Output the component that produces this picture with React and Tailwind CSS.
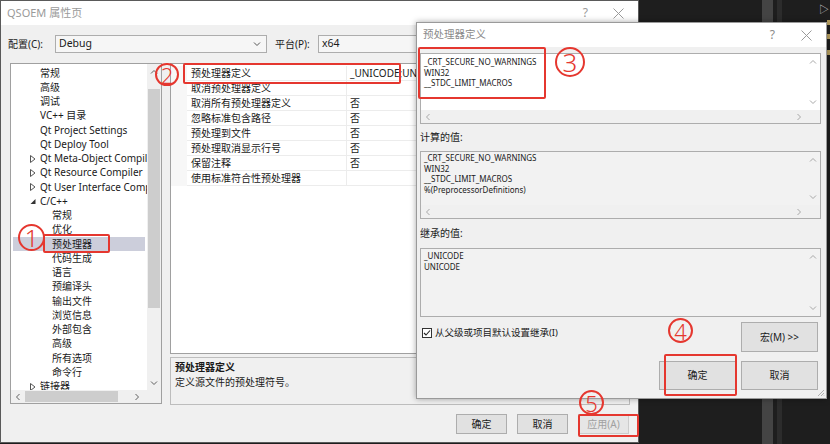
import React from 'react';

const Chev = ({ dir, c = '#a8a8a8' }) => {
  const p = {
    up: 'M1 5.5 L4 2.5 L7 5.5',
    down: 'M1 2.5 L4 5.5 L7 2.5',
    left: 'M5.5 1 L2.5 4 L5.5 7',
    right: 'M2.5 1 L5.5 4 L2.5 7',
  }[dir];
  return (
    <svg width="8" height="8" viewBox="0 0 8 8" className="block">
      <path d={p} fill="none" stroke={c} strokeWidth="1" />
    </svg>
  );
};

const XIcon = ({ c = '#9a9a9a' }) => (
  <svg width="11" height="11" viewBox="0 0 11 11" className="block">
    <path d="M0.5 0.5 L10.5 10.5 M10.5 0.5 L0.5 10.5" stroke={c} strokeWidth="1" />
  </svg>
);

const tree = [
  { t: '常规', l: 1 },
  { t: '高级', l: 1 },
  { t: '调试', l: 1 },
  { t: 'VC++ 目录', l: 1 },
  { t: 'Qt Project Settings', l: 1 },
  { t: 'Qt Deploy Tool', l: 1 },
  { t: 'Qt Meta-Object Compiler', l: 1, a: 'c' },
  { t: 'Qt Resource Compiler', l: 1, a: 'c' },
  { t: 'Qt User Interface Compiler', l: 1, a: 'c' },
  { t: 'C/C++', l: 1, a: 'o' },
  { t: '常规', l: 2 },
  { t: '优化', l: 2 },
  { t: '预处理器', l: 2, sel: true },
  { t: '代码生成', l: 2 },
  { t: '语言', l: 2 },
  { t: '预编译头', l: 2 },
  { t: '输出文件', l: 2 },
  { t: '浏览信息', l: 2 },
  { t: '外部包含', l: 2 },
  { t: '高级', l: 2 },
  { t: '所有选项', l: 2 },
  { t: '命令行', l: 2 },
  { t: '链接器', l: 1, a: 'c' },
];

const props = [
  ['预处理器定义', '_UNICODE;UNICODE;_CRT_SECURE_NO_WARNINGS;WIN32'],
  ['取消预处理器定义', ''],
  ['取消所有预处理器定义', '否'],
  ['忽略标准包含路径', '否'],
  ['预处理到文件', '否'],
  ['预处理取消显示行号', '否'],
  ['保留注释', '否'],
  ['使用标准符合性预处理器', ''],
];

function TreeRow({ item }) {
  return (
    <div
      className={`h-[14.25px] mx-[2px] flex items-center whitespace-nowrap ${
        item.sel ? 'bg-[#cccedb]' : ''
      }`}
    >
      {item.l === 1 ? (
        <>
          <div className="w-[17px] shrink-0" />
          <div className="w-[10px] shrink-0 flex items-center">
            {item.a === 'c' && (
              <svg width="6" height="8" viewBox="0 0 6 8" className="block">
                <path d="M0.5 0.5 L5 4 L0.5 7.5 Z" fill="none" stroke="#555" strokeWidth="1" />
              </svg>
            )}
            {item.a === 'o' && (
              <svg width="6" height="8" viewBox="0 0 6 8" className="block">
                <path d="M5.5 2 L5.5 7 L0.5 7 Z" fill="#333" />
              </svg>
            )}
          </div>
        </>
      ) : (
        <div className="w-[39px] shrink-0" />
      )}
      <span>{item.t}</span>
    </div>
  );
}

function TextBox({ boxClass, lines, white, hscroll, padClass }) {
  return (
    <div className={`border border-[#adadad] flex flex-col ${boxClass} ${white ? 'bg-white' : 'bg-[#f2f2f2]'}`}>
      <div className="flex flex-1 min-h-0">
        <div className={`flex-1 pl-[3px] text-[8px] leading-[10.5px] text-[#1a1a1a] ${padClass}`}>
          {lines.map((l, i) => (
            <div key={i}>{l}</div>
          ))}
        </div>
        <div className="w-[14px] flex flex-col items-center justify-between py-[4px]">
          <Chev dir="up" />
          <Chev dir="down" />
        </div>
      </div>
      {hscroll && (
        <div className="h-[13px] flex bg-[#f0f0f0]">
          <div className="flex-1 flex items-center justify-between px-[3px]">
            <Chev dir="left" />
            <Chev dir="right" />
          </div>
          <div className="w-[14px]" />
        </div>
      )}
    </div>
  );
}

const Btn = ({ children, cls }) => (
  <div className={`flex items-center justify-center border border-[#adadad] bg-[#e1e1e1] text-[10px] text-[#1a1a1a] ${cls}`}>
    {children}
  </div>
);

export default function App() {
  return (
    <div className="relative w-[830px] h-[444px] overflow-hidden bg-[#1e1e1e] font-['Noto_Sans','Noto_Sans_CJK_SC',sans-serif]">
      {/* desktop background (other app) */}
      <div className="absolute left-[762px] top-0 w-[11px] h-[444px] bg-[#444444]" />
      <div className="absolute left-[777px] top-0 w-[5px] h-[444px] bg-[#2c2c2c]" />
      <div className="absolute left-[819px] top-[2px] text-[10px] text-[#cfcfcf]">▷</div>
      <div className="absolute left-[827px] top-[20px] w-[3px] h-[5px] bg-[#b8a060]" />
      <div className="absolute left-[827px] top-[34px] w-[3px] h-[5px] bg-[#b8a060]" />
      <div className="absolute left-[827px] top-[50px] w-[3px] h-[5px] bg-[#b8a060]" />

      {/* Main property window */}
      <div className="absolute left-0 top-0 w-[639px] h-[443px] bg-[#f0f0f0] border border-[#5a5a5a] flex flex-col">
        <div className="h-[24px] bg-white flex items-center pl-[6px] pr-[14px] text-[11px] text-[#9a9a9a] shrink-0">
          <span>QSOEM 属性页</span>
          <span className="ml-auto mr-[25px] text-[12px]">?</span>
          <XIcon />
        </div>

        <div className="flex items-center h-[18px] mt-[10px] pl-[7px] text-[10px] text-[#1a1a1a] shrink-0">
          <span className="w-[47px]">配置(C):</span>
          <div className="w-[212px] h-[18px] border border-[#adadad] bg-[#f6f6f6] flex items-center pl-[3px] pr-[5px]">
            <span className="text-[10.5px]">Debug</span>
            <svg width="8" height="6" viewBox="0 0 8 6" className="ml-auto">
              <path d="M1 1.5 L4 4.5 L7 1.5" fill="none" stroke="#555" strokeWidth="1" />
            </svg>
          </div>
          <span className="ml-[8px] w-[43px]">平台(P):</span>
          <div className="w-[300px] h-[18px] border border-[#adadad] bg-[#f6f6f6] flex items-center pl-[3px]">
            <span className="text-[10.5px]">x64</span>
          </div>
        </div>

        <div className="flex mt-[10px] pl-[9px] gap-[8px] shrink-0">
          {/* tree */}
          <div className="w-[152px] h-[341px] border border-[#a0a0a0] bg-white flex flex-col">
            <div className="flex flex-1 min-h-0">
              <div className="flex-1 overflow-hidden pt-[2px] text-[10px] text-[#1a1a1a]">
                {tree.map((it, i) => (
                  <TreeRow key={i} item={it} />
                ))}
              </div>
              <div className="w-[14px] bg-[#f0f0f0] flex flex-col items-center">
                <div className="h-[15px] flex items-center">
                  <Chev dir="up" c="#606060" />
                </div>
                <div className="mt-[10px] w-[12px] h-[219px] bg-[#cdcdcd]" />
                <div className="mt-auto h-[14px] flex items-center">
                  <Chev dir="down" c="#606060" />
                </div>
              </div>
            </div>
            <div className="h-[13px] flex bg-[#f0f0f0]">
              <div className="w-[14px] flex items-center justify-center">
                <Chev dir="left" c="#606060" />
              </div>
              <div className="w-[93px] h-[11px] mt-[1px] bg-[#cdcdcd]" />
              <div className="flex-1 flex items-center justify-end pr-[6px]">
                <Chev dir="right" c="#606060" />
              </div>
              <div className="w-[14px]" />
            </div>
          </div>

          {/* right column */}
          <div className="w-[460px] flex flex-col">
            <div className="h-[291px] border border-[#a0a0a0] bg-white pt-[2px] flex flex-col">
              {props.map(([n, v], i) => (
                <div key={i} className="h-[15px] flex text-[10px] text-[#1a1a1a] whitespace-nowrap">
                  <div className="w-[16px] shrink-0 bg-[#f7f7f7]" />
                  <div className="w-[160px] shrink-0 pl-[4px] flex items-center border-b border-r border-[#ececec]">
                    {n}
                  </div>
                  <div className="flex-1 pl-[3px] flex items-center overflow-hidden border-b border-[#ececec]">
                    {v}
                  </div>
                </div>
              ))}
            </div>
            <div className="mt-[3px] h-[48px] border border-[#bdbdbd] bg-[#f0f0f0] pl-[4px] pt-[2px] text-[10px] leading-[15px] text-[#1a1a1a]">
              <div className="font-bold">预处理器定义</div>
              <div>定义源文件的预处理符号。</div>
            </div>
          </div>
        </div>

        <div className="flex justify-end gap-[10px] pr-[9px] mt-[9px]">
          <Btn cls="w-[51px] h-[20px]">确定</Btn>
          <Btn cls="w-[51px] h-[20px]">取消</Btn>
          <div className="w-[51px] h-[20px] flex items-center justify-center border border-[#cccccc] bg-[#e6e6e6] text-[10px] text-[#a0a0a0]">
            应用(A)
          </div>
        </div>
      </div>

      {/* Preprocessor definitions dialog */}
      <div className="absolute left-[416px] top-[22px] w-[411px] h-[377px] bg-[#f0f0f0] border border-[#9a9a9a] shadow-[0_0_6px_rgba(0,0,0,0.35)] flex flex-col">
        <div className="h-[24px] bg-white flex items-center pl-[6px] pr-[14px] text-[10.5px] text-[#8a8a8a] shrink-0">
          <span>预处理器定义</span>
          <span className="ml-auto mr-[26px] text-[12px]">?</span>
          <XIcon />
        </div>
        <div className="pl-[3px] pr-[5px] pt-[6px] flex flex-col">
          <TextBox
            boxClass="h-[71px]"
            white
            hscroll
            padClass="pt-[3px]"
            lines={['_CRT_SECURE_NO_WARNINGS', 'WIN32', '__STDC_LIMIT_MACROS']}
          />
          <div className="h-[27px] flex items-center text-[10px] text-[#1a1a1a]">计算的值:</div>
          <TextBox
            boxClass="h-[68px]"
            hscroll
            padClass="pt-[1px]"
            lines={['_CRT_SECURE_NO_WARNINGS', 'WIN32', '__STDC_LIMIT_MACROS', '%(PreprocessorDefinitions)']}
          />
          <div className="h-[29px] flex items-center text-[10px] text-[#1a1a1a]">继承的值:</div>
          <TextBox boxClass="h-[69px]" padClass="pt-[2px]" lines={['_UNICODE', 'UNICODE']} />
          <div className="flex mt-[5px]">
            <div className="flex items-center mt-[6px] h-[10px] ml-[2px] gap-[3px] text-[9.5px] text-[#1a1a1a]">
              <svg width="10" height="10" viewBox="0 0 10 10" className="block">
                <rect x="0.5" y="0.5" width="9" height="9" fill="white" stroke="#333" strokeWidth="1" />
                <path d="M2 5 L4 7 L8 2.5" fill="none" stroke="#222" strokeWidth="1.1" />
              </svg>
              <span>从父级或项目默认设置继承(I)</span>
            </div>
            <div className="ml-auto mr-[3px] flex flex-col items-end gap-[9px]">
              <Btn cls="w-[77px] h-[30px]">宏(M) &gt;&gt;</Btn>
              <div className="flex gap-[5px]">
                <Btn cls="w-[77px] h-[29px]">确定</Btn>
                <Btn cls="w-[77px] h-[29px]">取消</Btn>
              </div>
            </div>
          </div>
        </div>
        <svg width="8" height="8" viewBox="0 0 8 8" className="absolute right-[1px] bottom-[1px]">
          <path d="M7 1 L1 7 M7 4 L4 7 M7 6.5 L6.5 7" stroke="#b0b0b0" strokeWidth="1" />
        </svg>
      </div>

      {/* Red annotations */}
      <div className="absolute left-[18px] top-[224px] w-[27px] h-[27px] rounded-full border-2 border-[#e5372f] flex items-center justify-center text-[24px] leading-none font-light text-[#e5372f]">1</div>
      <div className="absolute left-[43px] top-[234px] w-[67px] h-[19px] border-2 border-[#e5372f] rounded-[2px]" />

      <div className="absolute left-[155px] top-[63px] w-[24px] h-[23px] rounded-full border-2 border-[#e5372f] flex items-center justify-center text-[22px] leading-none font-light text-[#e5372f]">2</div>
      <div className="absolute left-[183px] top-[63px] w-[218px] h-[21px] border-2 border-[#e5372f] rounded-[2px]" />

      <div className="absolute left-[555px] top-[47px] w-[30px] h-[30px] rounded-full border-2 border-[#e5372f] flex items-center justify-center text-[26px] leading-none font-light text-[#e5372f]">3</div>
      <div className="absolute left-[418px] top-[47px] w-[128px] h-[52px] border-2 border-[#e5372f] rounded-[2px]" />

      <div className="absolute left-[668px] top-[318px] w-[25px] h-[25px] rounded-full border-2 border-[#e5372f] flex items-center justify-center text-[22px] leading-none font-light text-[#e5372f]">4</div>
      <div className="absolute left-[664px] top-[354px] w-[73px] h-[42px] border-2 border-[#e5372f] rounded-[2px]" />

      <div className="absolute left-[579px] top-[390px] w-[25px] h-[25px] rounded-full border-2 border-[#e5372f] flex items-center justify-center text-[22px] leading-none font-light text-[#e5372f]">5</div>
      <div className="absolute left-[578px] top-[414px] w-[61px] h-[23px] border-2 border-[#e5372f] rounded-[2px]" />
    </div>
  );
}
